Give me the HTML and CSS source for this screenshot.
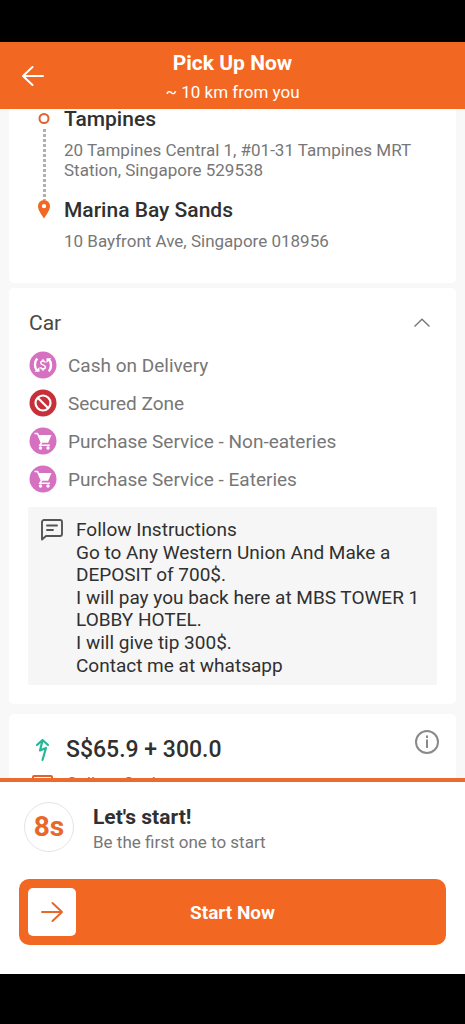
FILE: index.html
```html
<!DOCTYPE html>
<html lang="en">
<head>
<meta charset="utf-8">
<meta name="viewport" content="width=device-width, initial-scale=1">
<title>Pick Up Now</title>
<link rel="stylesheet" href="styles.css">
</head>
<body>
<header class="topbar">
  <button class="back" type="button" aria-label="Back">
    <svg width="24" height="24" viewBox="0 0 24 24" fill="none" stroke="currentColor" stroke-width="2" stroke-linecap="round" stroke-linejoin="round"><path d="M22 12H2M11.500 3L2 12l9.500 9"/></svg>
  </button>
  <div class="topbar-text">
    <h1 class="title">Pick Up Now</h1>
    <p class="subtitle">~ 10 km from you</p>
  </div>
</header>

<main class="content">
  <section class="card route">
    <div class="stop">
      <div class="marker">
        <svg width="12" height="20" viewBox="0 0 12 20" fill="none"><circle cx="6" cy="9.500" r="4.500" stroke="#e0622f" stroke-width="2"/></svg>
        <span class="dots"></span>
      </div>
      <div class="stop-text">
        <h2 class="place">Tampines</h2>
        <p class="address">20 Tampines Central 1, #01-31 Tampines MRT Station, Singapore 529538</p>
      </div>
    </div>
    <div class="stop">
      <div class="marker">
        <svg width="12" height="20" viewBox="0 0 12 20"><path fill="#f26722" fill-rule="evenodd" d="M6 0a6 6 0 0 0-6 6c0 4.200 3.500 8.500 6 12.500 2.500-4 6-8.300 6-12.500a6 6 0 0 0-6-6zm0 3.900a2.200 2.200 0 1 1 0 4.400 2.200 2.200 0 0 1 0-4.400z"/></svg>
      </div>
      <div class="stop-text">
        <h2 class="place">Marina Bay Sands</h2>
        <p class="address">10 Bayfront Ave, Singapore 018956</p>
      </div>
    </div>
  </section>

  <section class="card vehicle">
    <div class="vehicle-head">
      <h2 class="vehicle-name">Car</h2>
      <button class="toggle" type="button" aria-label="Collapse" aria-expanded="true">
        <svg width="18" height="12" viewBox="0 0 18 12" fill="none" stroke="#777" stroke-width="1.400"><path d="M1.500 9.500L9 2.200l7.500 7.300"/></svg>
      </button>
    </div>
    <ul class="services">
      <li class="service">
        <svg width="28" height="28" viewBox="0 0 28 28"><circle cx="14" cy="14" r="13.500" fill="#d571c0"/><g fill="none" stroke="#fff"><path stroke-width="2.400" d="M8.200 7.500C5.200 11 5.300 16.500 8 19.500M19.800 20.500C22.800 17 22.700 11.500 20 8.500"/><path stroke-width="1.500" d="M16.300 11.600c-.3-1-1.100-1.500-2.300-1.500-1.300 0-2.200.7-2.200 1.800 0 2.600 4.600 1.400 4.600 4.100 0 1.200-1 1.900-2.400 1.900-1.300 0-2.200-.6-2.500-1.700M14 8.300v2M14 17.700v2"/></g><path fill="#fff" d="M5.500 20.800h5v-4.800zM22.500 7.200h-5v4.800z"/></svg>
        <span>Cash on Delivery</span>
      </li>
      <li class="service">
        <svg width="28" height="28" viewBox="0 0 28 28"><circle cx="14" cy="14" r="13.500" fill="#c5303a"/><g fill="none" stroke="#fff" stroke-width="2.200"><circle cx="14" cy="14" r="7.500"/><path d="M8.700 8.700l10.600 10.600"/></g></svg>
        <span>Secured Zone</span>
      </li>
      <li class="service">
        <svg width="28" height="28" viewBox="0 0 28 28"><circle cx="14" cy="14" r="13.500" fill="#d571c0"/><path fill="none" stroke="#fff" stroke-width="1.600" d="M5.500 6.500h3l4 9-1.600 2.700h10"/><path fill="#fff" d="M9 8h13.500l-3.300 7.800h-7z"/><circle cx="11.500" cy="21" r="1.700" fill="#fff"/><circle cx="19" cy="21" r="1.700" fill="#fff"/></svg>
        <span>Purchase Service - Non-eateries</span>
      </li>
      <li class="service">
        <svg width="28" height="28" viewBox="0 0 28 28"><circle cx="14" cy="14" r="13.500" fill="#d571c0"/><path fill="none" stroke="#fff" stroke-width="1.600" d="M5.500 6.500h3l4 9-1.600 2.700h10"/><path fill="#fff" d="M9 8h13.500l-3.300 7.800h-7z"/><circle cx="11.500" cy="21" r="1.700" fill="#fff"/><circle cx="19" cy="21" r="1.700" fill="#fff"/></svg>
        <span>Purchase Service - Eateries</span>
      </li>
    </ul>
    <div class="note">
      <svg class="note-icon" width="22" height="22" viewBox="0 0 22 22" fill="none" stroke="#555" stroke-width="1.900" stroke-linejoin="round" stroke-linecap="round"><path d="M1 20.500V3a2 2 0 0 1 2-2h16a2 2 0 0 1 2 2v12a2 2 0 0 1-2 2H5zM6 6.500h10M6 11h6"/></svg>
      <div class="note-text">
        <p>Follow Instructions</p>
        <p>Go to Any Western Union And Make a DEPOSIT of 700$.</p>
        <p>I will pay you back here at MBS TOWER 1 LOBBY HOTEL.</p>
        <p>I will give tip 300$.</p>
        <p>Contact me at whatsapp</p>
      </div>
    </div>
  </section>

  <section class="card fare">
    <div class="fare-list">
      <div class="fare-row">
        <svg width="28" height="24" viewBox="0 0 28 24" fill="none" stroke="#25b896" stroke-width="2.200" stroke-linecap="round" stroke-linejoin="round"><path d="M9 7l5.500-5 5.500 5M14.500 2.500L12 12.500l6-2.500-3.500 12"/></svg>
        <strong class="price">S$65.9 + 300.0</strong>
      </div>
      <div class="fare-row">
        <svg width="28" height="16" viewBox="0 0 28 16" fill="none" stroke="#e0622f" stroke-width="2"><rect x="5" y="1" width="19" height="13" rx="1"/><path d="M9 4h11v7H9z" stroke-width="1.400"/></svg>
        <span class="collect">Collect Cash</span>
      </div>
    </div>
    <button class="info" type="button" aria-label="Fare details">
      <svg width="24" height="24" viewBox="0 0 24 24" fill="none" stroke="#8a8a8a" stroke-width="2"><circle cx="12" cy="12" r="11"/><path d="M12 9.500v8.500M12 5.500v2.400"/></svg>
    </button>
  </section>
</main>

<footer class="sheet">
  <div class="prompt">
    <span class="countdown">8s</span>
    <div class="prompt-text">
      <h2 class="prompt-title">Let's start!</h2>
      <p class="prompt-sub">Be the first one to start</p>
    </div>
  </div>
  <button class="start" type="button">
    <span class="thumb"><svg width="24" height="24" viewBox="0 0 24 24" fill="none" stroke="currentColor" stroke-width="2" stroke-linecap="round" stroke-linejoin="round"><path d="M2 12h20M12.500 3L22 12l-9.500 9"/></svg></span>
    <span class="start-label">Start Now</span>
  </button>
</footer>
</body>
</html>
```

FILE: styles.css
```css
* {
  box-sizing: border-box;
}

body {
  margin: 0;
  padding: 42px 0 50px;
  height: 100vh;
  display: flex;
  flex-direction: column;
  background: #000;
  color: #303030;
  font-family: Roboto, "Liberation Sans", sans-serif;
}

h1, h2, p, ul {
  margin: 0;
  padding: 0;
}

svg {
  display: block;
  flex: none;
}

button {
  padding: 0;
  border: 0;
  background: none;
  color: inherit;
  font: inherit;
}

.topbar {
  flex: none;
  display: grid;
  grid-template-columns: 24px 1fr 24px;
  align-items: center;
  padding: 5px 21px;
  background: #f26722;
  color: #fff;
}

.topbar-text {
  padding-top: 3px;
  text-align: center;
}

.title {
  font-size: 21px;
  font-weight: 700;
  line-height: 26px;
}

.subtitle {
  padding-top: 4px;
  font-size: 17px;
  line-height: 24px;
}

.content {
  flex: 1;
  min-height: 0;
  overflow: hidden;
  padding: 0 9px;
  background: #f8f8f8;
}

.card {
  background: #fff;
  border-radius: 5px;
}

.route {
  padding: 0 20px 32px 29px;
  border-top-left-radius: 0;
  border-top-right-radius: 0;
}

.stop {
  display: flex;
  gap: 14px;
}

.marker {
  flex: none;
  display: flex;
  flex-direction: column;
  align-items: center;
  width: 12px;
}

.dots {
  flex: 1;
  width: 3px;
  background: repeating-linear-gradient(#b0b0b0 0 3px, transparent 3px 5px);
}

.stop:first-child .stop-text {
  padding-bottom: 20px;
}

.place {
  font-size: 21px;
  font-weight: 500;
  line-height: 20px;
}

.address {
  padding-top: 11px;
  color: #777;
  font-size: 17px;
  line-height: 20px;
}

.vehicle {
  margin-top: 5px;
  padding: 22px 19px 19px;
}

.vehicle-head {
  display: flex;
  justify-content: space-between;
  align-items: center;
  padding: 0 6px 0 1px;
}

.vehicle-name {
  color: #484848;
  font-size: 21px;
  font-weight: 400;
  line-height: 26px;
}

.services {
  padding: 10px 0 9px 1px;
  list-style: none;
}

.service {
  display: flex;
  align-items: center;
  gap: 11px;
  height: 38px;
  color: #777;
  font-size: 19px;
}

.note {
  display: flex;
  gap: 13px;
  padding: 12px 8px 8px 13px;
  background: #f6f6f6;
}

.note-text {
  display: grid;
  gap: 1px;
  font-size: 19px;
  line-height: 22px;
}

.fare {
  display: flex;
  justify-content: space-between;
  align-items: flex-start;
  margin-top: 10px;
  padding: 16px 17px 20px 19px;
}

.fare-list {
  display: grid;
  gap: 10px;
  padding-top: 7px;
}

.fare-row {
  display: flex;
  align-items: center;
  gap: 10px;
}

.price {
  font-size: 23px;
  font-weight: 500;
  line-height: 26px;
}

.collect {
  color: #777;
  font-size: 17px;
  line-height: 20px;
}

.sheet {
  flex: none;
  padding: 18px 19px 29px;
  border-top: 4px solid #ed6a2c;
  background: #fff;
}

.prompt {
  display: flex;
  align-items: center;
  gap: 19px;
  padding-left: 5px;
}

.prompt-text {
  padding-top: 4px;
}

.countdown {
  flex: none;
  width: 50px;
  border: 1px solid #e4e4e4;
  border-radius: 50%;
  color: #e8672a;
  font-size: 28px;
  font-weight: 700;
  line-height: 48px;
  text-align: center;
}

.prompt-title {
  font-size: 21px;
  font-weight: 700;
  line-height: 26px;
}

.prompt-sub {
  color: #777;
  font-size: 17px;
  line-height: 24px;
}

.start {
  display: grid;
  grid-template-columns: 48px 1fr 48px;
  align-items: center;
  width: 100%;
  margin-top: 25px;
  padding: 9px;
  border-radius: 10px;
  background: #f26722;
  color: #fff;
}

.thumb {
  display: grid;
  place-items: center;
  height: 48px;
  border-radius: 5px;
  background: #fff;
  color: #e8672a;
}

.start-label {
  font-size: 19px;
  font-weight: 700;
}
```
